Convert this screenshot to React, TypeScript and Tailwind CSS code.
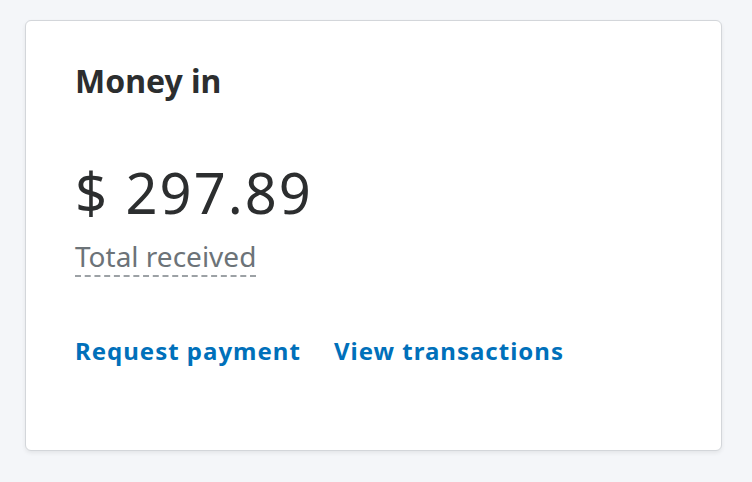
import React from "react";

export default function App() {
  return (
    <div
      className="w-[752px] h-[482px] bg-[#f4f6f9] pt-[20px] pl-[25px]"
      style={{ fontFamily: '"Noto Sans", "Open Sans", sans-serif' }}
    >
      <div className="w-[697px] h-[431px] bg-white border border-[#d3d6da] rounded-[6px] shadow-[0_2px_4px_rgba(0,0,0,0.07)] pl-[49px] pt-[44px]">
        <h2 className="text-[32px] leading-none font-bold text-[#2c2e2f]">Money in</h2>
        <div className="mt-[67px] text-[56px] leading-none tracking-[2px] text-[#2c2e2f]">$ 297.89</div>
        <div className="mt-[22px] w-fit text-[28px] leading-none text-[#6c7378] border-b-2 border-dashed border-[#9ca1a5] pb-[5px]">
          Total received
        </div>
        <div className="mt-[62px] flex gap-[33px] text-[24px] leading-none font-bold tracking-[1px] text-[#0070ba]">
          <a href="#">Request payment</a>
          <a href="#">View transactions</a>
        </div>
      </div>
    </div>
  );
}
